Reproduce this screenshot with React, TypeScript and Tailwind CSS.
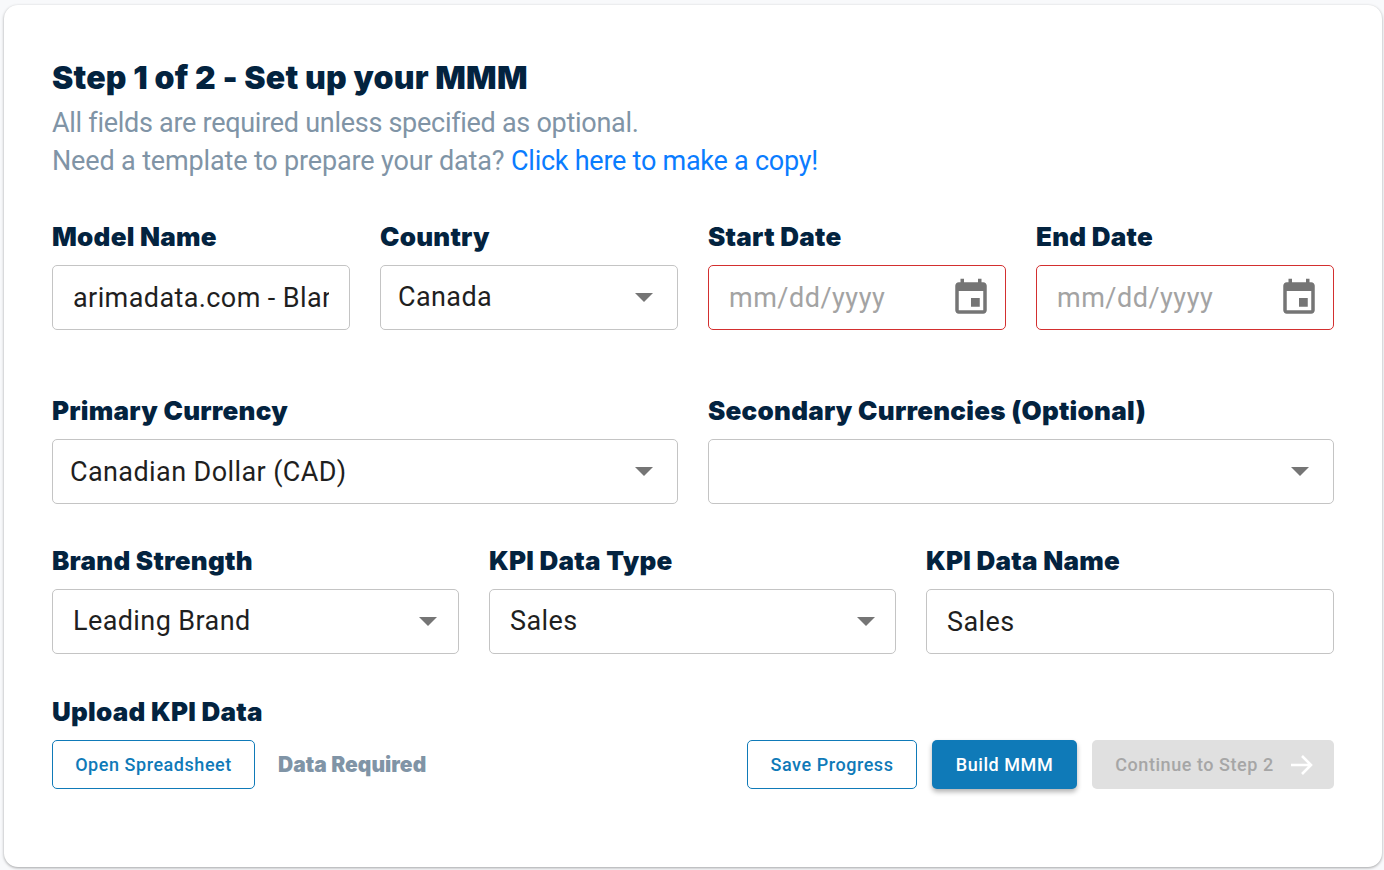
import React from "react";

const heading = "font-['Inter',sans-serif]";

function Label({ children }: { children: React.ReactNode }) {
  return (
    <div className={`h-7 mb-[14px] text-[26px] leading-7 font-black text-[#03233f] tracking-[0.25px] whitespace-nowrap ${heading}`}>
      {children}
    </div>
  );
}

function Caret() {
  return (
    <svg width="18" height="9" viewBox="0 0 18 9" className="shrink-0">
      <path d="M0 0 L18 0 L9 9 Z" fill="#757575" />
    </svg>
  );
}

function SelectBox({ value, pl, pr = "pr-6", shift = "" }: { value?: string; pl: string; pr?: string; shift?: string }) {
  return (
    <div className={`h-[65px] border border-[#c4c4c4] rounded-[5px] bg-white flex items-center justify-between ${pl} ${pr}`}>
      <span className={`text-[27px] text-[#1f1f1f] font-['Roboto',sans-serif] tracking-[0.4px] whitespace-nowrap ${shift}`}>{value}</span>
      <Caret />
    </div>
  );
}

function TextBox({ value }: { value: string }) {
  return (
    <input
      readOnly
      value={value}
      className="block w-full h-[65px] border border-[#c4c4c4] rounded-[5px] bg-white px-5 text-[27px] text-[#1f1f1f] font-['Roboto',sans-serif] tracking-[0.4px] outline-none"
    />
  );
}

function DateBox() {
  return (
    <div className="h-[65px] border border-[#d32f2f] rounded-[5px] bg-white flex items-center justify-between pl-5 pr-[13px]">
      <span className="pt-0.5 text-[27px] text-[#a3a3a3] font-['Roboto',sans-serif] tracking-[0.5px]">mm/dd/yyyy</span>
      <svg width="42" height="42" viewBox="0 0 24 24" fill="#757575">
        <path d="M17 12h-5v5h5v-5zM16 1v2H8V1H6v2H5c-1.11 0-1.99.9-1.99 2L3 19c0 1.1.89 2 2 2h14c1.1 0 2-.9 2-2V5c0-1.1-.9-2-2-2h-1V1h-2zm3 18H5V8h14v11z" />
      </svg>
    </div>
  );
}

const btn = "h-[49px] rounded-[5px] text-[18px] font-medium tracking-[0.55px]";

export default function App() {
  return (
    <div className="w-[1384px] h-[870px] bg-[#f8f9fb] pt-[5px] pl-1 pr-[2px] overflow-hidden font-['Roboto',sans-serif]">
      <div className="h-[862px] bg-white rounded-[14px] shadow-[0_1px_3px_rgba(0,0,0,0.35)] px-12 pt-[52px]">
        <h1 className={`h-10 pt-px text-[32px] leading-10 font-black text-[#03233f] tracking-[0.2px] ${heading}`}>Step 1 of 2 - Set up your MMM</h1>
        <p className="mt-[7px] h-[38px] text-[27px] leading-[38px] text-[#8094a6] tracking-[-0.28px]">All fields are required unless specified as optional.</p>
        <p className="h-[38px] text-[27px] leading-[38px] text-[#8094a6] tracking-[-0.15px]">
          Need a template to prepare your data? <span className="text-[#0a7cff] tracking-[-0.25px]">Click here to make a copy!</span>
        </p>

        <div className="mt-[43px] grid grid-cols-4 gap-x-[30px]">
          <div><Label>Model Name</Label><TextBox value="arimadata.com - Blank" /></div>
          <div><Label>Country</Label><SelectBox value="Canada" pl="pl-[17px]" /></div>
          <div><Label>Start Date</Label><DateBox /></div>
          <div><Label>End Date</Label><DateBox /></div>
        </div>

        <div className="mt-[67px] grid grid-cols-2 gap-x-[30px]">
          <div><Label>Primary Currency</Label><SelectBox value="Canadian Dollar (CAD)" pl="pl-[17px]" shift="pt-0.5" /></div>
          <div><Label>Secondary Currencies (Optional)</Label><SelectBox pl="pl-[17px]" /></div>
        </div>

        <div className="mt-[43px] grid grid-cols-[407px_407px_408px] gap-x-[30px]">
          <div><Label>Brand Strength</Label><SelectBox value="Leading Brand" pl="pl-5" pr="pr-[21px]" /></div>
          <div><Label>KPI Data Type</Label><SelectBox value="Sales" pl="pl-5" pr="pr-5" /></div>
          <div><Label>KPI Data Name</Label><TextBox value="Sales" /></div>
        </div>

        <div className="mt-11">
          <Label>Upload KPI Data</Label>
          <div className="flex items-center">
            <button className={`w-[203px] border border-[#0f7ab8] bg-white text-[#0f7ab8] ${btn}`}>Open Spreadsheet</button>
            <span className={`ml-[23px] text-[21px] font-black text-[#8094a6] tracking-[0.05px] ${heading}`}>Data Required</span>
            <button className={`ml-auto w-[170px] border border-[#0f7ab8] bg-white text-[#0f7ab8] ${btn}`}>Save Progress</button>
            <button className={`ml-[15px] w-[145px] bg-[#0f7ab8] text-white shadow-[0_3px_5px_rgba(0,0,0,0.3)] ${btn}`}>Build MMM</button>
            <button className={`ml-[15px] w-[242px] bg-[#e0e0e0] text-[#a6a6a6] flex items-center justify-center gap-[15px] pl-0.5 ${btn}`}>
              Continue to Step 2
              <svg width="24" height="24" viewBox="0 0 24 24" fill="none" stroke="#ffffff" strokeWidth="2.6">
                <path d="M2 12h20M13 3l9 9-9 9" />
              </svg>
            </button>
          </div>
        </div>
      </div>
    </div>
  );
}
